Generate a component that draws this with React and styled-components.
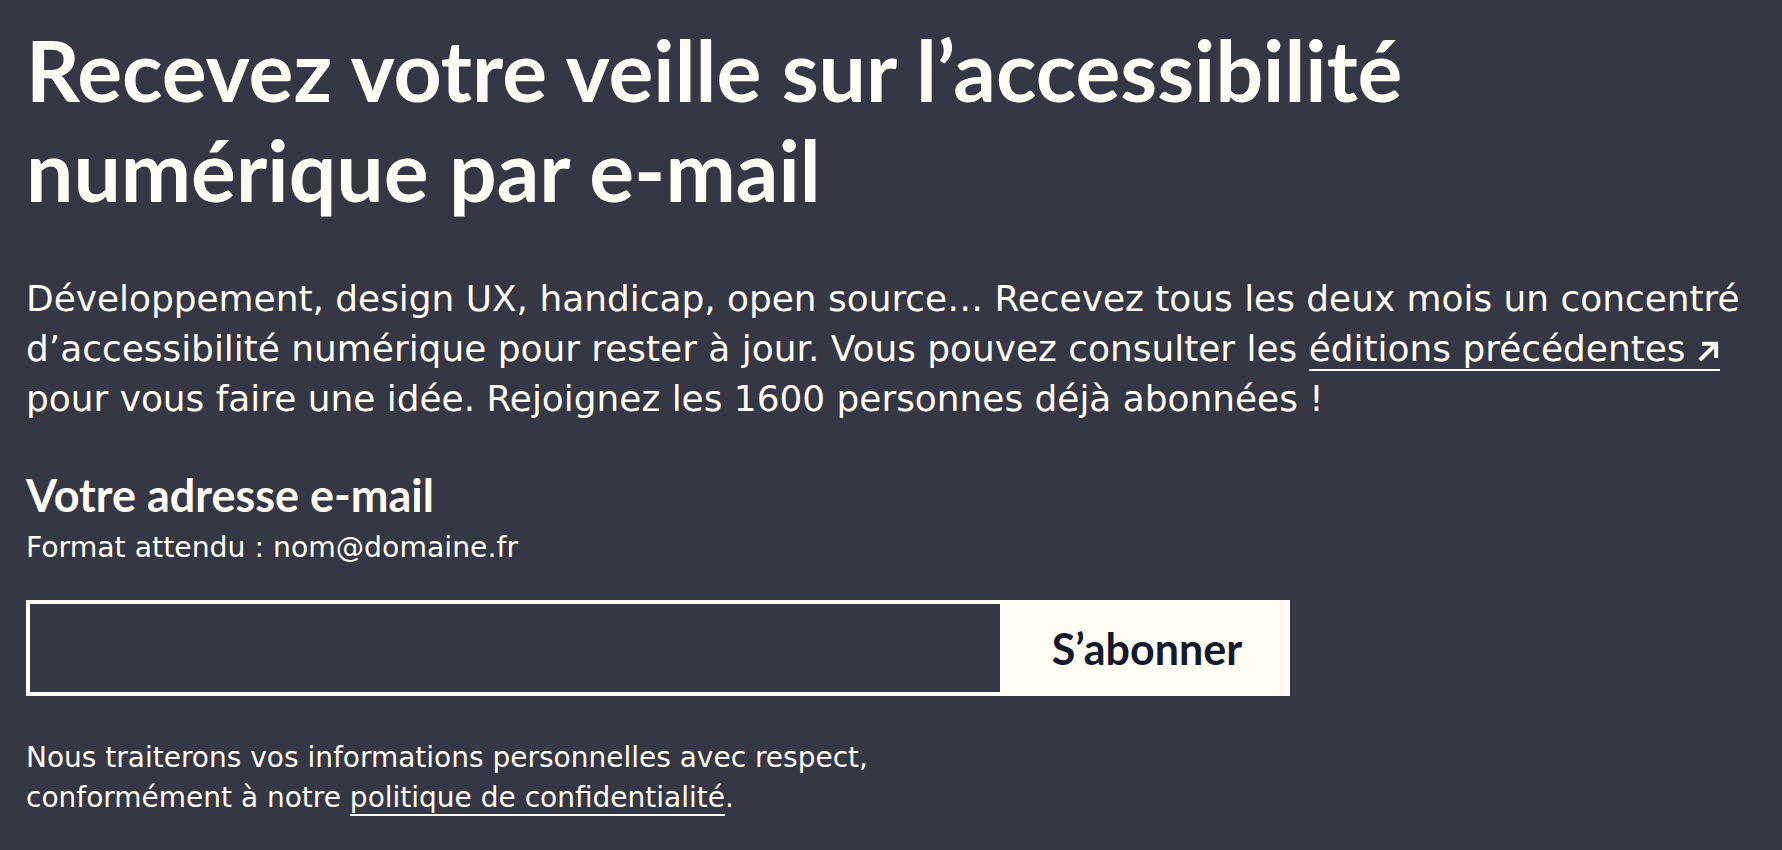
import React from "react";
import styled, { createGlobalStyle } from "styled-components";

const Global = createGlobalStyle`
  html, body { margin: 0; padding: 0; background: #353744; }
  body { font-family: "DejaVu Sans", Verdana, sans-serif; color: #fffdf3; }
`;

const Page = styled.main`
  padding: 20px 26px 40px 26px;
  display: flex;
  flex-direction: column;
`;

const Title = styled.h1`
  margin: 0;
  font-family: Lato, "Noto Sans", sans-serif;
  font-weight: 700;
  font-size: 84px;
  line-height: 100px;
  max-width: 1500px;
`;

const Intro = styled.p`
  margin: 54px 0 0 0;
  font-size: 35.9px;
  line-height: 50px;
`;

const Link = styled.a`
  color: inherit;
  text-decoration: none;
  border-bottom: 2px solid currentColor;
  white-space: nowrap;
`;

const Arrow = styled.svg`
  width: 22px;
  height: 22px;
  margin-left: 12px;
  vertical-align: -1px;
`;

const Form = styled.form`
  margin-top: 46px;
  display: flex;
  flex-direction: column;
`;

const Label = styled.label`
  font-family: Lato, "Noto Sans", sans-serif;
  font-weight: 700;
  font-size: 45px;
  line-height: 50px;
`;

const Hint = styled.span`
  margin-top: 8px;
  font-size: 28.3px;
  line-height: 40px;
`;

const Row = styled.div`
  margin-top: 32px;
  display: flex;
  width: 1264px;
  height: 96px;
`;

const Input = styled.input`
  flex: 1;
  box-sizing: border-box;
  height: 100%;
  background: #353744;
  border: 4px solid #fffdf3;
  margin: 0;
  padding: 0 20px;
  color: #fffdf3;
  font-family: "DejaVu Sans", sans-serif;
  font-size: 30px;
  outline: none;
`;

const Button = styled.button`
  width: 286px;
  height: 100%;
  border: none;
  margin: 0;
  background: #fffdf3;
  color: #14192d;
  font-family: Lato, "Noto Sans", sans-serif;
  font-weight: 700;
  font-size: 43px;
  cursor: pointer;
`;

const Notice = styled.p`
  margin: 42px 0 0 0;
  font-size: 28px;
  line-height: 40px;
  max-width: 900px;
`;

export default function App() {
  return (
    <>
      <Global />
      <Page>
        <Title>Recevez votre veille sur l’accessibilité numérique par e-mail</Title>
        <Intro>
          Développement, design UX, handicap, open source… Recevez tous les deux mois un
          concentré d’accessibilité numérique pour rester à jour. Vous pouvez consulter les{" "}
          <Link href="#">
            éditions précédentes
            <Arrow viewBox="0 0 20 20" aria-hidden="true">
              <path d="M3 17 L15 5 M5.5 3.5 H16.5 V14.5" stroke="#fffdf3" strokeWidth="3.6" fill="none" strokeLinecap="square" />
            </Arrow>
          </Link>{" "}
          pour vous faire une idée. Rejoignez les 1600 personnes déjà abonnées !
        </Intro>
        <Form onSubmit={(e) => e.preventDefault()}>
          <Label htmlFor="email">Votre adresse e-mail</Label>
          <Hint>Format attendu : nom@domaine.fr</Hint>
          <Row>
            <Input id="email" type="email" />
            <Button type="submit">S’abonner</Button>
          </Row>
        </Form>
        <Notice>
          Nous traiterons vos informations personnelles avec respect, conformément à notre{" "}
          <Link href="#">politique de confidentialité</Link>.
        </Notice>
      </Page>
    </>
  );
}
